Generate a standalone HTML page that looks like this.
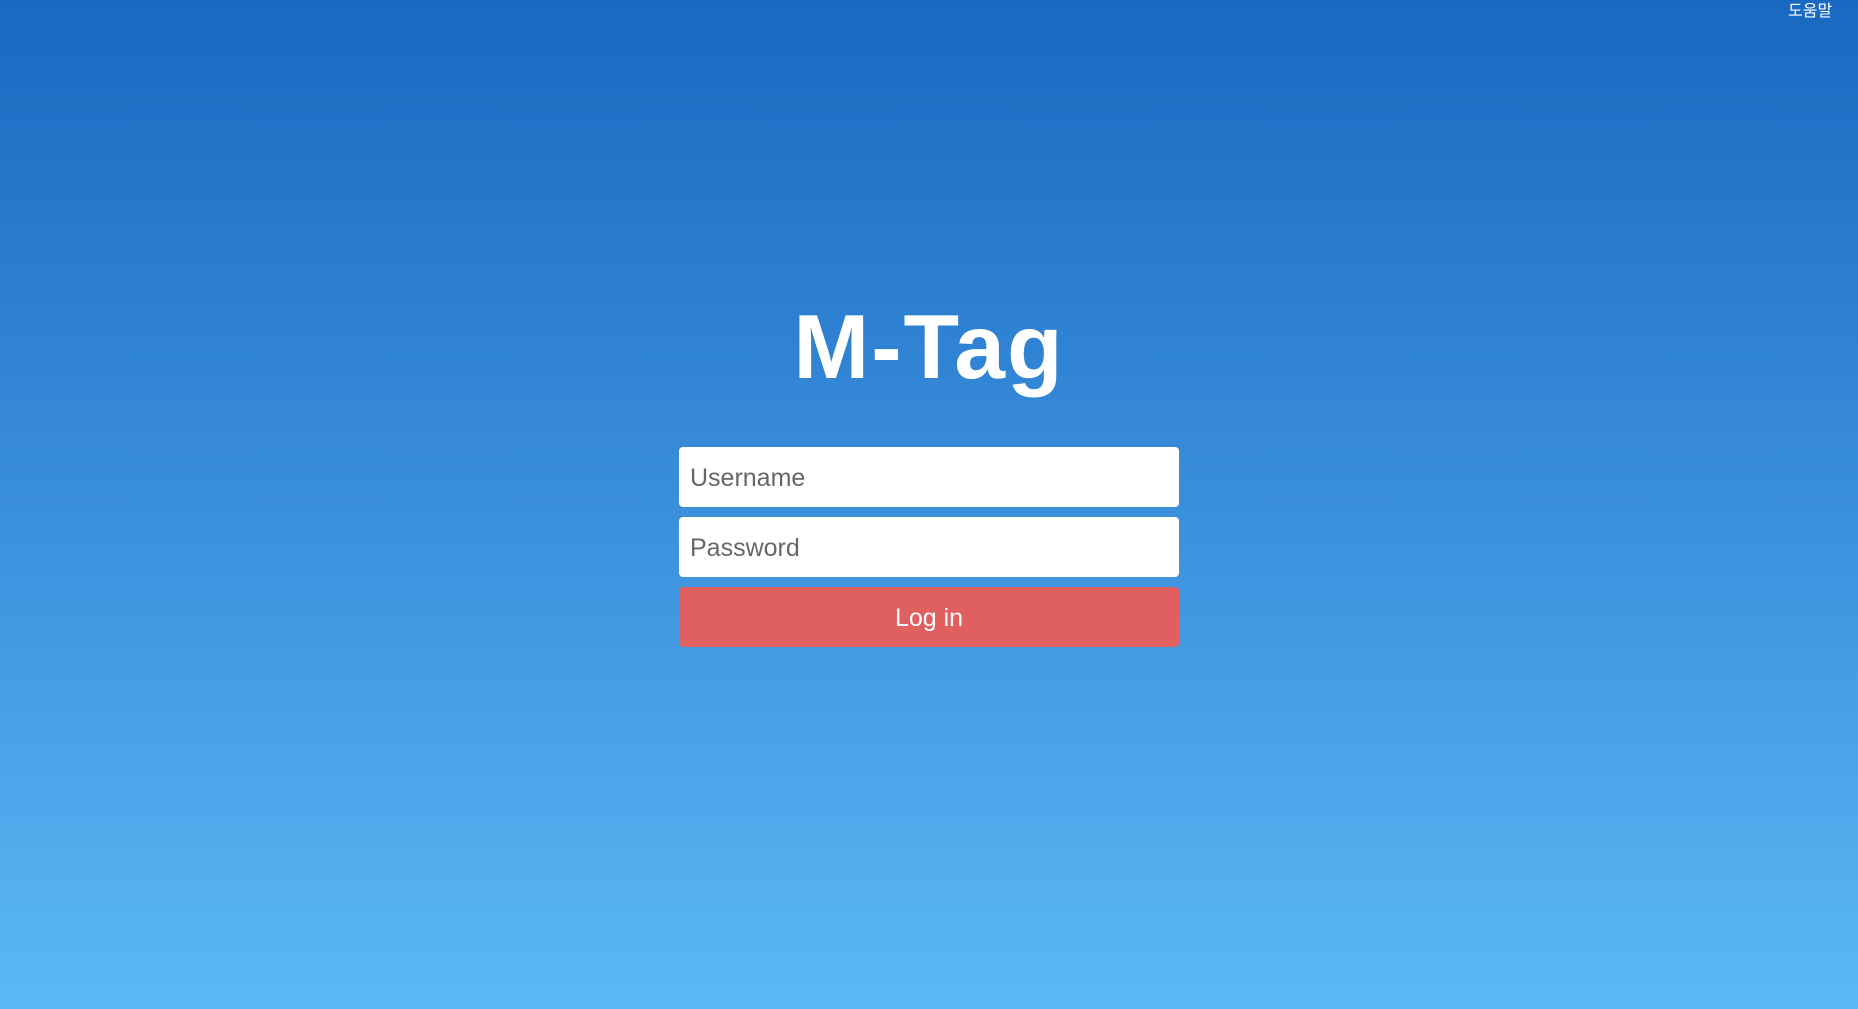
<!DOCTYPE html>
<html><head><meta charset="utf-8"><style>
html,body{margin:0;padding:0;width:1858px;height:1009px;overflow:hidden}
body{background:linear-gradient(to bottom,#1968c1 0%,#3a8fdb 50%,#5bb9f6 100%);font-family:"Liberation Sans","Noto Sans CJK KR",sans-serif;position:relative}
.help{position:absolute;left:1788px;top:2px;color:#fff;font-size:16px;line-height:20px}
h1{position:absolute;left:0;width:1858px;top:298px;margin:0;text-align:center;color:#fff;font-weight:bold;font-size:91px;line-height:100px;letter-spacing:2px}
.f{position:absolute;left:679px;width:500px;height:60px;border-radius:4px;box-sizing:border-box;font-size:25px;line-height:62px;padding-left:11px}
.in{background:#fff;color:#666}
.btn{background:#e05f5f;color:#fff;text-align:center;padding-left:0}
</style></head><body>
<div class="help">도움말</div>
<h1>M-Tag</h1>
<div class="f in" style="top:447px">Username</div>
<div class="f in" style="top:517px">Password</div>
<div class="f btn" style="top:587px">Log in</div>
</body></html>
